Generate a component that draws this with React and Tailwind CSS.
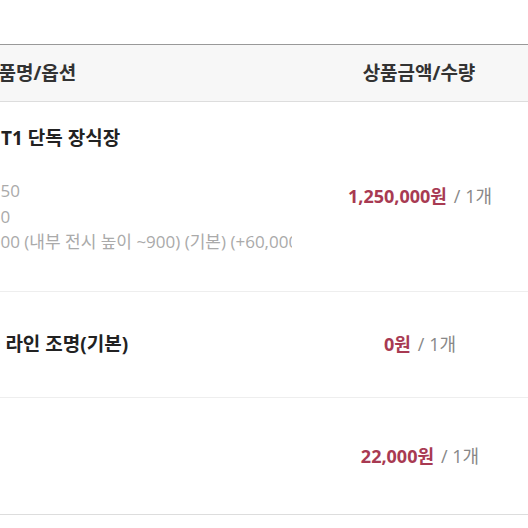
const font = "font-['Open_Sans','Noto_Sans_CJK_KR',sans-serif]"

const rows = [
  {
    id: 1,
    height: 'h-[190px]',
    border: 'border-[#eeeeee]',
    title: 'T1 단독 장식장',
    options: ['1150', '450', '1000 (내부 전시 높이 ~900) (기본) (+60,000원)'],
    price: '1,250,000원',
  },
  {
    id: 2,
    height: 'h-[106px]',
    border: 'border-[#eeeeee]',
    title: 'LED 라인 조명(기본)',
    price: '0원',
  },
  {
    id: 3,
    height: 'h-[117px]',
    border: 'border-[#dddddd]',
    price: '22,000원',
  },
]

export default function App() {
  return (
    <div className={`w-[528px] h-[528px] overflow-hidden bg-white pt-[44px] ${font}`}>
      <div className="flex h-[58px] items-center border-y border-t-[#999999] border-b-[#dddddd] bg-[#f7f7f7] text-[19px] font-bold text-[#333333]">
        <div className="w-[292px] overflow-hidden whitespace-nowrap">
          <span className="-ml-[19px] inline-block">상품명/옵션</span>
        </div>
        <div className="flex-1 pl-[18px] text-center">상품금액/수량</div>
      </div>

      {rows.map((r) => (
        <div key={r.id} className={`flex ${r.height} border-b ${r.border}`}>
          <div className="w-[292px] overflow-hidden whitespace-nowrap">
            {r.options ? (
              <div className="pt-[22px]">
                <div className="pl-[1px] text-[19px] font-bold leading-[28px] text-[#222222]">{r.title}</div>
                <div className="mt-[26px] text-[17px] leading-[25.5px] text-[#aaaaaa]">
                  {r.options.map((o) => (
                    <div key={o} className="-ml-[19px]">
                      {o}
                    </div>
                  ))}
                </div>
              </div>
            ) : r.title ? (
              <div className="flex h-full items-center">
                <div className="-ml-[35px] text-[19px] font-bold text-[#222222]">{r.title}</div>
              </div>
            ) : null}
          </div>
          <div className="flex flex-1 items-center justify-center pl-[20px] text-[18px]">
            <span className="font-bold text-[#a83a52]">{r.price}</span>
            <span className="ml-[7px] text-[#888888]">/ 1개</span>
          </div>
        </div>
      ))}
    </div>
  )
}
